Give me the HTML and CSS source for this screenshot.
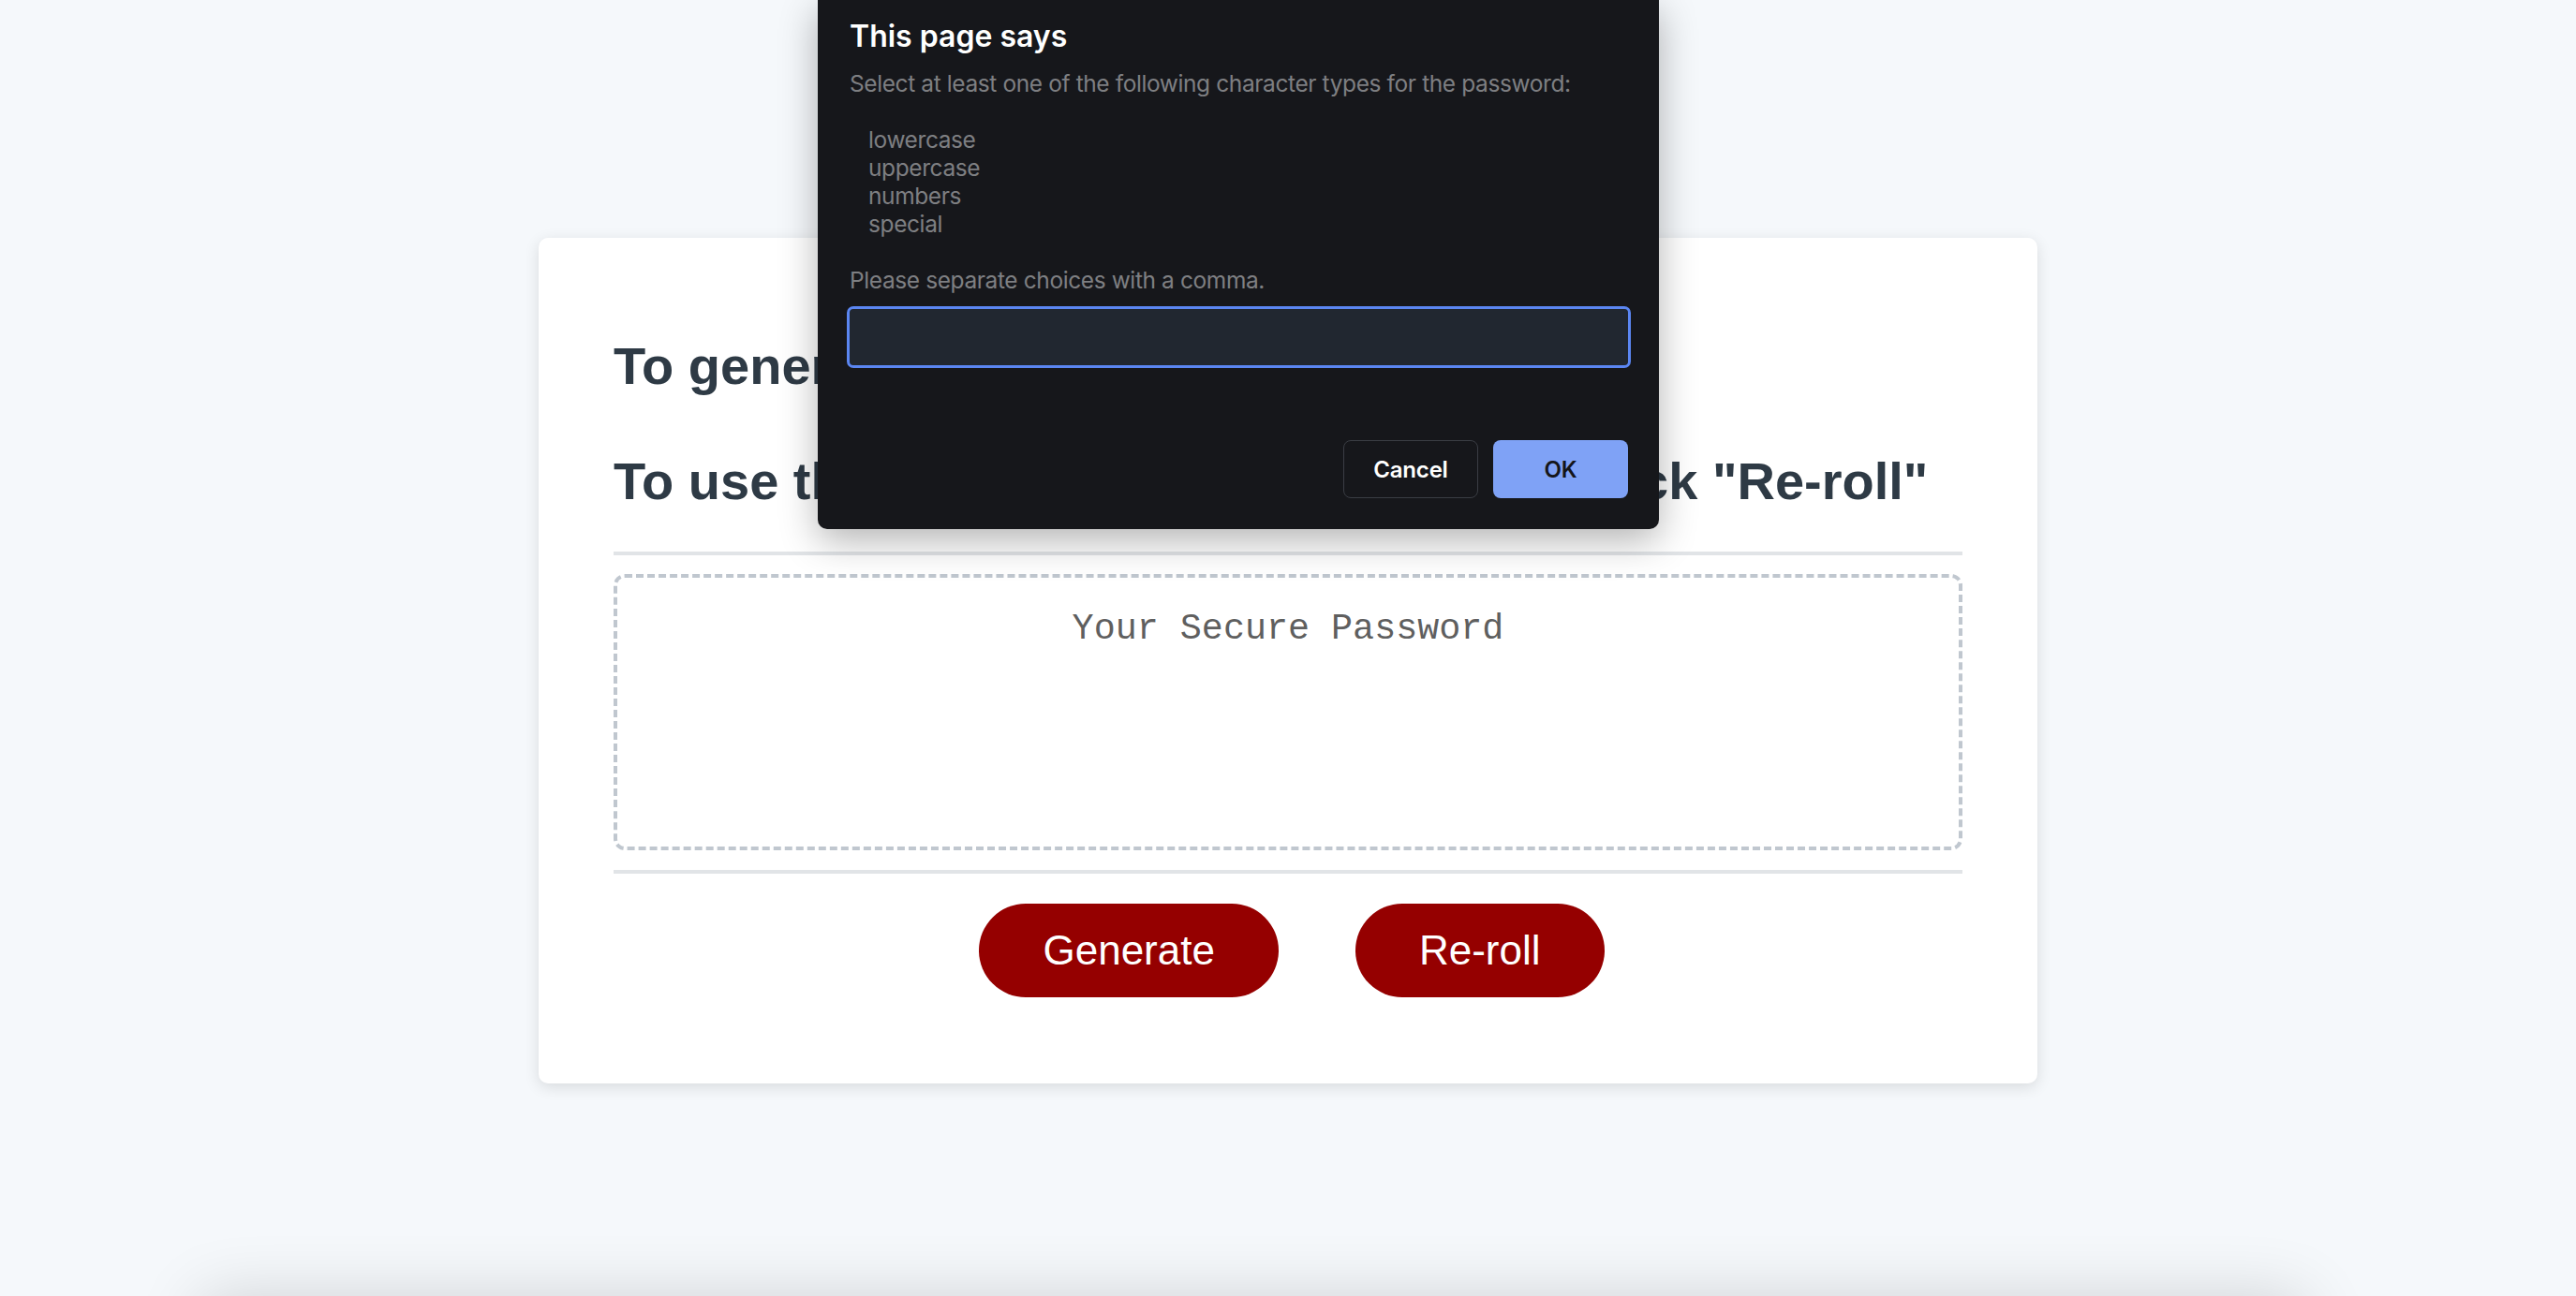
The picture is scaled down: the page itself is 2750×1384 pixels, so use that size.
FILE: index.html
```html
<!DOCTYPE html>
<html lang="en">
<head>
<meta charset="utf-8">
<title>Password Generator</title>
<link rel="stylesheet" href="styles.css">
</head>
<body>
<div class="page">
  <main class="card">
    <div class="card-header">
      <h2 class="instruction">To generate a password, click "Generate"</h2>
      <h2 class="instruction">To use the <span class="instruction-mid">same settings as last time,</span> click "Re-roll"</h2>
    </div>
    <div class="card-body">
      <div class="password-box" id="password"><span class="placeholder">Your Secure Password</span></div>
    </div>
    <div class="card-footer">
      <button class="btn" id="generate" type="button">Generate</button>
      <button class="btn" id="reroll" type="button">Re-roll</button>
    </div>
  </main>
  <div class="lower-panel"></div>
</div>

<div class="prompt" role="dialog" aria-labelledby="prompt-title">
  <h3 class="prompt-title" id="prompt-title">This page says</h3>
  <div class="prompt-message">
    <p>Select at least one of the following character types for the password:</p>
    <ul class="prompt-list">
      <li>lowercase</li>
      <li>uppercase</li>
      <li>numbers</li>
      <li>special</li>
    </ul>
    <p>Please separate choices with a comma.</p>
  </div>
  <input class="prompt-input" type="text" aria-label="Character types">
  <div class="prompt-actions">
    <button class="prompt-btn cancel" type="button">Cancel</button>
    <button class="prompt-btn ok" type="button">OK</button>
  </div>
</div>
</body>
</html>
```

FILE: styles.css
```css
* {
  box-sizing: border-box;
}

html,
body {
  margin: 0;
  height: 100%;
  overflow: hidden;
}

body {
  background: #f5f8fb;
  font-family: "Liberation Sans", Arial, sans-serif;
}

.page {
  height: 100vh;
  overflow: hidden;
  display: flex;
  flex-direction: column;
  align-items: center;
  padding-top: 254px;
}

/* ---------- card ---------- */
.card {
  flex: none;
  width: 1600px;
  background: #ffffff;
  border-radius: 10px;
  box-shadow: 0 4px 16px rgba(0, 0, 0, 0.12);
  padding: 60px 80px;
  color: #2e3a45;
}

.card-header {
  padding: 45px 0 43px;
  border-bottom: 4px solid #e1e4e7;
}

.instruction {
  margin: 0;
  font-size: 56px;
  line-height: 64px;
  font-weight: 700;
  white-space: nowrap;
}

.instruction + .instruction {
  margin-top: 59px;
}

.instruction-mid {
  letter-spacing: 0.6px;
}

.card-body {
  padding: 20px 0 21px;
}

.password-box {
  height: 295px;
  border: 4px dashed #c0c7cf;
  border-radius: 12px;
  padding-top: 33px;
  text-align: center;
  font-family: "Liberation Mono", "Courier New", monospace;
  font-size: 38.4px;
  color: #5f5f5f;
}

.card-footer {
  border-top: 4px solid #e1e4e7;
  display: flex;
  justify-content: center;
  gap: 82px;
  padding: 32px 0 32px 8px;
}

.btn {
  font-family: "Liberation Sans", Arial, sans-serif;
  font-size: 44px;
  line-height: 44px;
  color: #ffffff;
  background: #950000;
  border: none;
  border-radius: 50px;
  padding: 28px 68px;
  cursor: pointer;
}

/* ---------- panel below the fold ---------- */
.lower-panel {
  flex: none;
  align-self: flex-start;
  margin-left: 215px;
  width: 2245px;
  height: 200px;
  margin-top: auto;
  margin-bottom: -208px;
  background: #f5f8fb;
  box-shadow: 0 -6px 70px rgba(0, 0, 0, 0.16);
}

/* ---------- browser prompt dialog ---------- */
.prompt {
  position: absolute;
  top: 0;
  left: 873px;
  width: 898px;
  background: #16171b;
  border-radius: 0 0 10px 10px;
  box-shadow: 0 12px 40px rgba(0, 0, 0, 0.3);
  padding: 19px 33px 33px 34px;
  font-family: Inter, "Noto Sans", sans-serif;
}

.prompt-title {
  margin: 0;
  font-size: 32px;
  line-height: 40px;
  font-weight: 600;
  color: #ffffff;
}

.prompt-message {
  margin-top: 15px;
  font-size: 24.5px;
  letter-spacing: -0.4px;
  line-height: 30px;
  color: #7e7f82;
  white-space: nowrap;
}

.prompt-message p {
  margin: 0;
}

.prompt-list {
  list-style: none;
  margin: 30px 0;
  padding-left: 20px;
}

.prompt-input {
  display: block;
  width: 100%;
  height: 60px;
  margin-top: 16px;
  background: #212730;
  border: none;
  border-radius: 4px;
  outline: 3px solid #5b86f2;
}

.prompt-actions {
  margin-top: 80px;
  display: flex;
  justify-content: flex-end;
  gap: 16px;
}

.prompt-btn {
  width: 144px;
  height: 62px;
  border-radius: 8px;
  font-family: Inter, "Noto Sans", sans-serif;
  font-size: 24px;
  letter-spacing: -0.2px;
  font-weight: 600;
  cursor: pointer;
}

.prompt-btn.cancel {
  background: transparent;
  border: 1px solid #3a3d44;
  color: #ffffff;
}

.prompt-btn.ok {
  background: #7fa2f6;
  border: none;
  color: #15161a;
}
```
